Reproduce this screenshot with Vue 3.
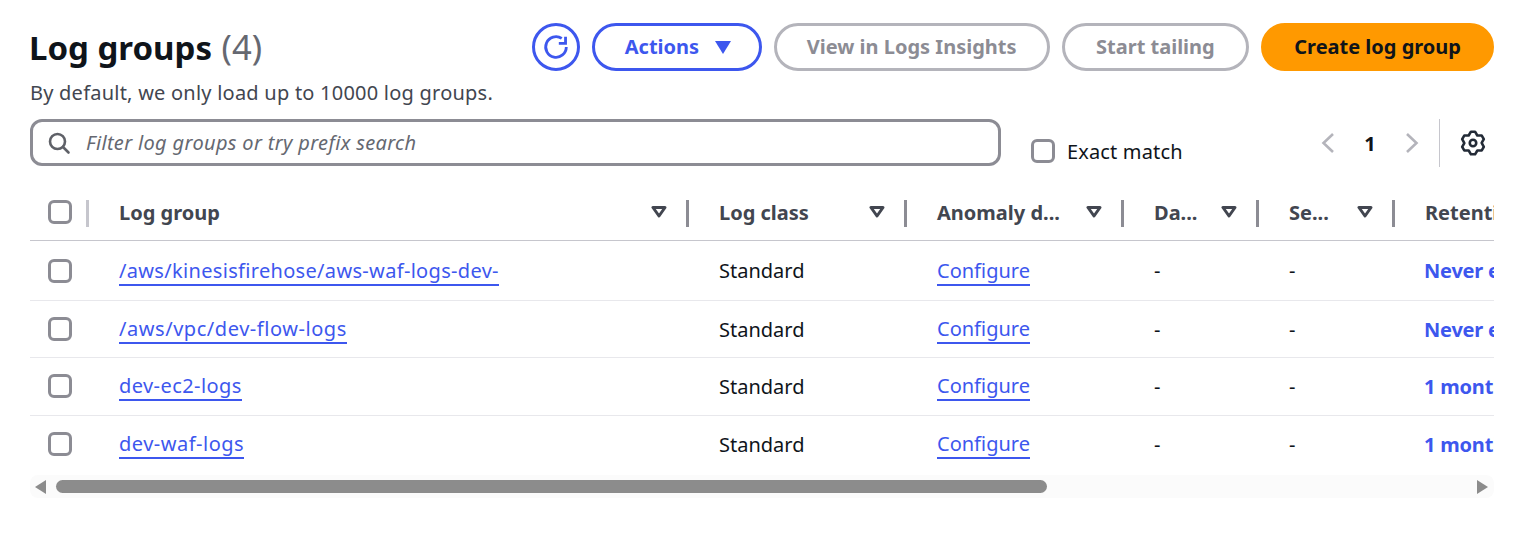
<script setup>
const rows = [
  { name: '/aws/kinesisfirehose/aws-waf-logs-dev-', retention: 'Never expire', spacing: 0.32 },
  { name: '/aws/vpc/dev-flow-logs', retention: 'Never expire', spacing: 0.55 },
  { name: 'dev-ec2-logs', retention: '1 month', spacing: 0.42 },
  { name: 'dev-waf-logs', retention: '1 month', spacing: 0.5 },
]
const columns = [
  { label: 'Log group', sort: true },
  { label: 'Log class', sort: true },
  { label: 'Anomaly d...', sort: true },
  { label: 'Da...', sort: true },
  { label: 'Se...', sort: true },
  { label: 'Retention', sort: false },
]
const gearPath = (() => {
  const pts = []
  const n = 6
  for (let i = 0; i < n; i++) {
    const a = (-90 + i * 60) * Math.PI / 180
    const w = 0.24
    const p = (r, t) => [(12 + r * Math.cos(t)).toFixed(2), (12 + r * Math.sin(t)).toFixed(2)].join(' ')
    pts.push(p(10.6, a - w * 0.75), p(10.6, a + w * 0.75), p(8, a + 0.52))
  }
  return 'M' + pts.join('L') + 'Z'
})()
</script>

<template>
  <div class="page">
    <header class="top">
      <div class="heading">
        <h1>Log groups <span class="count">(4)</span></h1>
      </div>
      <div class="actions">
        <button class="btn icon-btn" aria-label="Refresh">
          <svg width="26" height="26" viewBox="0 0 24 24" fill="none" stroke="currentColor" stroke-width="2.6">
            <path d="M21.5 12a9.5 9.5 0 1 1-4.2-7.9" />
            <path d="M20.8 2.5v6.2h-6.2" stroke-linejoin="miter" />
          </svg>
        </button>
        <button class="btn primary-outline">Actions <span class="caret"></span></button>
        <button class="btn disabled">View in Logs Insights</button>
        <button class="btn disabled tailing">Start tailing</button>
        <button class="btn orange">Create log group</button>
      </div>
    </header>
    <p class="sub">By default, we only load up to 10000 log groups.</p>
    <div class="filters">
      <label class="search">
        <svg width="24" height="24" viewBox="0 0 24 24" fill="none" stroke="#5f6168" stroke-width="2.6" stroke-linecap="round">
          <circle cx="10.5" cy="10.5" r="7.5" />
          <path d="M16 16l5.5 5.5" />
        </svg>
        <span class="ph">Filter log groups or try prefix search</span>
      </label>
      <label class="exact"><span class="box"></span>Exact match</label>
      <div class="pager">
        <svg class="chev" width="16" height="24" viewBox="0 0 16 24" fill="none" stroke="#b4b4bb" stroke-width="2.6"><path d="M13 3 3.5 12l9.5 9" /></svg>
        <span class="pg">1</span>
        <svg class="chev" width="16" height="24" viewBox="0 0 16 24" fill="none" stroke="#b4b4bb" stroke-width="2.6"><path d="M3 3l9.5 9L3 21" /></svg>
        <span class="vr"></span>
        <svg class="gear" width="26" height="26" viewBox="0 0 24 24" fill="none" stroke="#232b37" stroke-width="2.4" stroke-linejoin="round">
          <path :d="gearPath" />
          <circle cx="12" cy="12" r="3" />
        </svg>
      </div>
    </div>
    <div class="table">
      <div class="tr head">
        <div class="td check"><span class="box"></span><span class="div light"></span></div>
        <div v-for="c in columns" :key="c.label" class="td th">
          <span class="lbl">{{ c.label }}</span>
          <svg v-if="c.sort" class="sort" width="16" height="14" viewBox="0 0 16 14" fill="none" stroke="#424650" stroke-width="3" stroke-linejoin="round"><path d="M2 2.5h12L8 11z" /></svg>
          <span v-if="c.sort" class="div"></span>
        </div>
      </div>
      <div v-for="r in rows" :key="r.name" class="tr">
        <div class="td check"><span class="box"></span></div>
        <div class="td"><a class="link" :style="{ letterSpacing: r.spacing + 'px' }">{{ r.name }}</a></div>
        <div class="td">Standard</div>
        <div class="td"><a class="link">Configure</a></div>
        <div class="td">-</div>
        <div class="td">-</div>
        <div class="td last"><a class="strong">{{ r.retention }}</a></div>
      </div>
    </div>
    <div class="scroll">
      <span class="arrow left"></span>
      <span class="thumb"></span>
      <span class="arrow right"></span>
    </div>
  </div>
</template>

<style>
html, body { margin: 0; background: #fff; }
</style>

<style scoped>
.page {
  width: 1464px;
  padding: 23px 31px 0 30px;
  font-family: "Noto Sans", sans-serif;
  font-size: 20px;
  color: #0f141a;
  overflow: hidden;
}
.top { display: flex; justify-content: space-between; align-items: center; height: 48px; }
h1 { margin: 0 0 0 -1px; font-size: 33px; font-weight: 700; line-height: 48px; }
.count { font-weight: 400; color: #656871; font-size: 34.5px; margin-left: 1px; }
.actions { display: flex; gap: 12px; }
.btn {
  height: 48px;
  box-sizing: border-box;
  border-radius: 24px;
  border: 3px solid #3d57ee;
  background: #fff;
  font: 700 20px "Noto Sans", sans-serif;
  padding: 0 30px 2px;
  display: flex;
  align-items: center;
  color: #3d57ee;
}
.icon-btn { width: 48px; padding: 0; justify-content: center; }
.primary-outline { width: 170px; padding: 0 0 2px 30px; gap: 16px; }
.caret { width: 0; height: 0; margin-top: 2px; border-left: 8.5px solid transparent; border-right: 8.5px solid transparent; border-top: 13px solid #3d57ee; }
.disabled { border-color: #b4b4bb; color: #8c8c94; }
.tailing { padding: 0 31.5px 2px; }
.orange { background: #ff9900; border-color: #ff9900; color: #0f141a; }
.sub { margin: 9px 0 0; height: 26px; line-height: 26px; color: #424650; letter-spacing: 0.23px; }
.filters { display: flex; align-items: flex-start; margin-top: 13px; height: 47px; }
.search {
  width: 971px;
  height: 47px;
  box-sizing: border-box;
  border: 3px solid #8c8c94;
  border-radius: 12px;
  display: flex;
  align-items: center;
  padding-left: 14px;
  gap: 15px;
}
.ph { font-style: italic; color: #656871; letter-spacing: 0.34px; }
.exact { display: flex; align-items: center; gap: 12px; margin: 19px 0 0 30px; height: 26px; letter-spacing: 0.15px; }
.box { display: block; width: 24px; height: 24px; box-sizing: border-box; border: 3px solid #8c8c94; border-radius: 6px; flex: none; }
.pager { margin-left: auto; display: flex; align-items: center; height: 48px; margin-right: 8px; }
.pg { font-weight: 700; width: 68px; text-align: center; }
.chev { flex: none; }
.vr { width: 1px; height: 48px; background: #c6c6cd; margin: 0 20px 0 19px; }
.table { margin-top: 24px; }
.tr { display: grid; grid-template-columns: 58px 600px 218px 217px 135px 136px 100px; height: 58px; border-bottom: 1px solid #e8e8ec; box-sizing: border-box; overflow: hidden; }
.tr:nth-child(2) { height: 60px; }
.tr:nth-child(3) { height: 57px; }
.tr:last-child { height: 57px; border-bottom: 0; }
.tr:nth-child(n+4) .td { padding-bottom: 1px; }
.tr.head { height: 51px; border-bottom-color: #c6c6cd; }
.td { display: flex; align-items: center; padding-left: 31px; position: relative; white-space: nowrap; min-width: 0; }
.td.last { padding-left: 30px; }
.td.check { padding-left: 18px; }
.head .td { padding-bottom: 6px; }
.th { font-weight: 700; color: #424650; justify-content: space-between; padding-right: 21px; }
.th .lbl { white-space: nowrap; }
.sort { flex: none; }
.div { position: absolute; right: -1px; top: 10px; height: 27px; width: 3px; background: #8c8c94; }
.div.light { background: #c6c6cd; }
.link { display: block; color: #3d57ee; border-bottom: 2px solid #3d57ee; line-height: 26px; margin-top: 2px; }
.strong { color: #3d57ee; font-weight: 700; letter-spacing: -0.2px; }
.scroll { position: relative; height: 23px; margin-top: 2px; background: #fbfbfb; display: flex; align-items: center; border-radius: 8px; }
.thumb { position: absolute; left: 26px; width: 991px; height: 13px; background: #8c8c8c; border-radius: 7px; }
.arrow { position: absolute; width: 0; height: 0; border-top: 7.5px solid transparent; border-bottom: 7.5px solid transparent; }
.arrow.left { left: 5px; border-right: 11px solid #8c8c8c; }
.arrow.right { right: 6px; border-left: 11px solid #8c8c8c; }
</style>
